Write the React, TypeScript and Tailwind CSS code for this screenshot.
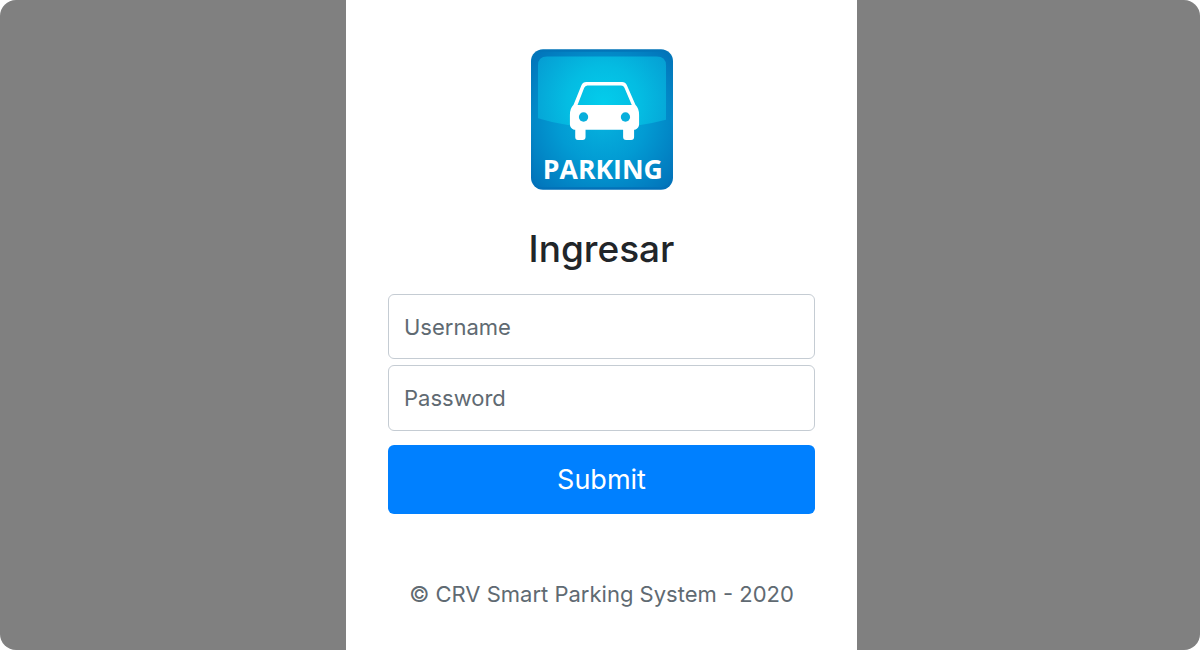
function ParkingLogo() {
  return (
    <svg
      role="img"
      aria-label="Parking"
      className="h-[141px] w-[142px]"
      viewBox="32 27 427 423"
    >
      <defs>
        <linearGradient id="frame" x1="0" y1="0" x2="0" y2="1">
          <stop offset="0" stopColor="#0274b8" />
          <stop offset="0.5" stopColor="#0489c8" />
          <stop offset="1" stopColor="#0270b8" />
        </linearGradient>
        <radialGradient id="base" gradientUnits="userSpaceOnUse" cx="245" cy="240" r="290">
          <stop offset="0" stopColor="#06b2de" />
          <stop offset="0.45" stopColor="#029bd3" />
          <stop offset="1" stopColor="#0272b9" />
        </radialGradient>
        <radialGradient id="gloss" gradientUnits="userSpaceOnUse" cx="250" cy="190" r="250">
          <stop offset="0" stopColor="#03cdec" />
          <stop offset="0.45" stopColor="#04bce2" />
          <stop offset="1" stopColor="#069ad1" />
        </radialGradient>
      </defs>
      <rect x="32" y="27" width="427" height="423" rx="36" fill="url(#frame)" />
      <rect x="39" y="35" width="412" height="407" rx="29" fill="url(#base)" />
      <path
        d="M53 235V76Q53 49 80 49H410Q438 49 438 76V239Q345 264 245 264Q140 262 53 235Z"
        fill="url(#gloss)"
      />
      <path
        fill="#fff"
        fillRule="evenodd"
        d="M198 126H306Q316 126 320 135L346 194Q357 205 357 224V253Q357 265 345 269H342V291Q342 300 333 300H318Q309 300 309 291V269H196V291Q196 300 187 300H173Q165 300 165 291V269H161Q149 265 149 253V224Q149 205 160 194L184 135Q188 126 198 126ZM201 136Q195 137 192 143L172 195H335L313 143Q310 136 303 136Z"
      />
      <circle cx="190" cy="231" r="14" fill="#08afdc" />
      <circle cx="316" cy="231" r="14" fill="#08afdc" />
      <text
        x="248"
        y="418"
        textAnchor="middle"
        fill="#fff"
        className="font-['Open_Sans',sans-serif] text-[80px] font-bold"
      >
        PARKING
      </text>
    </svg>
  );
}

const fieldClass =
  "w-full rounded-md border border-[#c5ccd3] bg-white px-[15px] text-[22px] text-[#495057] placeholder:text-[#606a72] placeholder:opacity-100";

export default function App() {
  return (
    <div className="bg-white font-['Inter',sans-serif]">
      <div className="flex min-h-screen justify-center rounded-2xl bg-[#808080] pl-[3px]">
        <main className="flex w-full max-w-[511px] flex-col items-center bg-white px-[42px] pt-[49px]">
          <ParkingLogo />
          <form className="flex w-full flex-col" onSubmit={(e) => e.preventDefault()}>
            <h1 className="mt-[35px] mb-[21px] text-center text-[37px] leading-[48px] font-medium text-[#212529]">
              Ingresar
            </h1>
            <input
              aria-label="Username"
              type="text"
              placeholder="Username"
              className={`${fieldClass} h-[65px]`}
            />
            <input
              aria-label="Password"
              type="password"
              placeholder="Password"
              className={`${fieldClass} mt-[6px] h-[66px]`}
            />
            <button
              type="submit"
              className="mt-[14px] h-[69px] w-full rounded-md bg-[#0080ff] pt-[2px] text-[27px] text-white"
            >
              Submit
            </button>
          </form>
          <p className="mt-[64px] mb-10 text-center text-[22px] leading-8 whitespace-nowrap text-[#606a72]">
            © CRV Smart Parking System - 2020
          </p>
        </main>
      </div>
    </div>
  );
}
